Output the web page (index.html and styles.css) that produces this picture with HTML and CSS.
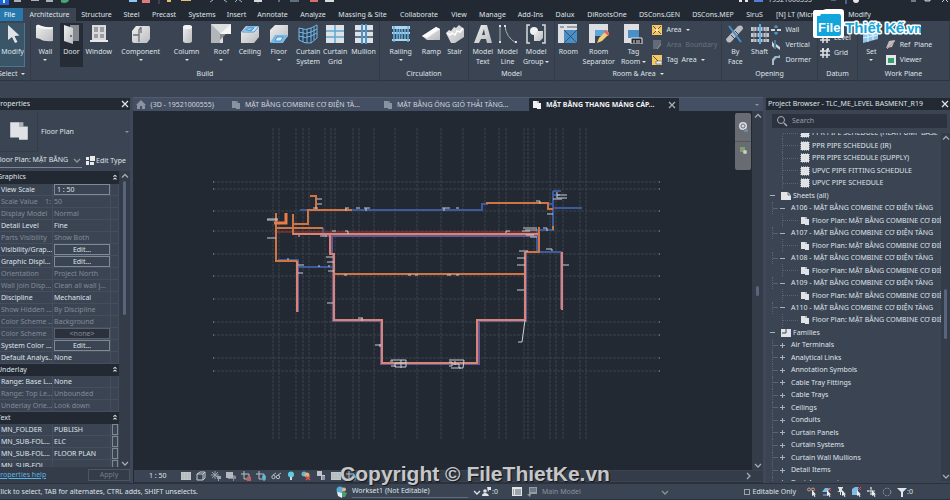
FILE: index.html
```html
<!DOCTYPE html>
<html lang="vi">
<head>
<meta charset="utf-8">
<title>TLC_ME_LEVEL BASMENT_R19</title>
<link rel="stylesheet" href="styles.css">
</head>
<body>
<svg class="defs" aria-hidden="true">
  <defs>
    <linearGradient id="g" x1="0" y1="0" x2="1" y2="1"><stop offset="0" stop-color="#f0f0f0"/><stop offset="1" stop-color="#b9bbbe"/></linearGradient>
    <symbol id="i-modify" viewBox="0 0 20 20"><path d="M5 1v15l4-3 3 6 2.500-1-3-6 5-.5z" fill="#dfe3e7"/></symbol>
    <symbol id="i-wall" viewBox="0 0 20 20"><path d="M1 2q2-2 4-.5 5 2.500 13 1.500v14q-9 1-13-2l-4-1z" fill="url(#g)"/><path d="M1 2q2-2 4-.5 5 2.500 13 1.500l-1 2Q7 6 1 2z" fill="#f4f4f4"/></symbol>
    <symbol id="i-door" viewBox="0 0 20 20"><path d="M9 1h9v16H9z" fill="#85898e"/><path d="M3 1l9 3v16l-9-3z" fill="url(#g)"/><circle cx="10" cy="12" r="1" fill="#555"/></symbol>
    <symbol id="i-window" viewBox="0 0 20 20"><path d="M3 1h14v15H3z" fill="#d9dadc"/><path d="M5 3h4v5H5zM11 3h4v5h-4zM5 10h4v4H5zM11 10h4v4h-4z" fill="#9b9fa4"/><path d="M1 16h18v2H1z" fill="#e8e8e8"/></symbol>
    <symbol id="i-component" viewBox="0 0 20 20"><path d="M1 7l4-5h13q1 0 1 2v11l-3 4H3q-2 0-2-2z" fill="url(#g)"/><path d="M2 11h6V6l2-3M8 11v7M10 9V3" stroke="#6d7178" stroke-width="1.300" fill="none"/></symbol>
    <symbol id="i-column" viewBox="0 0 20 20"><path d="M6 3q0-2 4.500-2T15 3v14q0 2-4.500 2T6 17z" fill="url(#g)"/><ellipse cx="10.500" cy="3" rx="4.500" ry="2" fill="#f5f5f5"/></symbol>
    <symbol id="i-roof" viewBox="0 0 20 20"><path d="M0 0h20v10h-8v9H0z" fill="#dcdddf"/><path d="M0 0l9 9v10H0z" fill="#b2b5b9"/><path d="M20 0L9 10h11z" fill="#f5f5f5"/><path d="M9 10h6l-6 6z" fill="#8a8e93"/></symbol>
    <symbol id="i-ceiling" viewBox="0 0 20 20"><path d="M1 8l5-6h13v11l-5 6H1z" fill="url(#g)"/><path d="M2 8l5-6h12l-5 6z" fill="#75b9e8"/><path d="M6 6l3-2h5l-3 3zM2 8h12l5-6" stroke="#3884c4" fill="#cfe8f9" stroke-width=".8"/></symbol>
    <symbol id="i-floor" viewBox="0 0 20 20"><path d="M1 6l5-5h13v11l-5 6H1z" fill="url(#g)"/><path d="M1 19l5-8h13l-5 8z" fill="#75b9e8"/><path d="M6 17l2-4h6l-2 4z" fill="#d6edfa" stroke="#3884c4" stroke-width=".8"/></symbol>
    <symbol id="i-csys" viewBox="0 0 20 20"><path d="M1 4q8 3 11-1l7-2v13l-6 5Q7 20 1 16z" fill="#29415b"/><path d="M1 4q7 3 12 0l6-3v13l-6 5Q7 20 1 16zM1 8q7 3 12 0l6-3M1 12q7 3 12 0l6-3M5 5v13M9 5v14M13 4v15M16 3v13" fill="none" stroke="#7db7e0" stroke-width="1"/></symbol>
    <symbol id="i-cgrid" viewBox="0 0 20 20"><path d="M1 1h18v18H1z" fill="#dfe2e5"/><path d="M1 7h18M1 13h18M10 1v18" stroke="#5fa6d8" stroke-width="1.500"/></symbol>
    <symbol id="i-mullion" viewBox="0 0 20 20"><path d="M1 1h18v18H1z" fill="#dfe2e5"/><path d="M1 7h18M1 13h18" stroke="#3d5066" stroke-width="1.500"/><path d="M7 0h2v20H7zM11 0h2v20h-2z" fill="#4d94c9"/></symbol>
    <symbol id="i-railing" viewBox="0 0 20 20"><path d="M1 2h18v3H1zM1 8h18v2H1zM1 15h18v2H1z" fill="#a8d7f2"/><path d="M3 2v16M6 5v10M8.500 5v10M11 5v10M14 5v10M17 2v16" stroke="#69b4e0" stroke-width="1.500"/></symbol>
    <symbol id="i-ramp" viewBox="0 0 20 20"><path d="M1 12L15 3l4 2v11H6z" fill="url(#g)"/><path d="M1 12L15 3l4 2L6 14z" fill="#fafafa"/></symbol>
    <symbol id="i-stair" viewBox="0 0 20 20"><path d="M1 9l3-3 2 1 3-4 2 1 3-3 5 4v8l-9 6H6z" fill="url(#g)"/><path d="M2 9l3 2 2-2 3 2 2-4 3 1 3-4" stroke="#fff" stroke-width="1.500" fill="none"/></symbol>
    <symbol id="i-mtext" viewBox="0 0 20 20"><path d="M1 19L8 1h6l5 18h-5l-1-4H8l-2 4zM9 11h3l-1-6z" fill="url(#g)" fill-rule="evenodd"/></symbol>
    <symbol id="i-mline" viewBox="0 0 20 20"><path d="M2 2v17M7 2q1 11 11 17" stroke="#a8adb4" fill="none"/><path d="M1 1h2v2H1zM1 17h2v2H1zM6 1h2v2H6zM17 17h2v2h-2z" fill="#dce0e4"/></symbol>
    <symbol id="i-mgroup" viewBox="0 0 20 20"><path d="M4 1H1v18h3M16 1h3v18h-3" stroke="#d9dce0" fill="none" stroke-width="1.500"/><circle cx="8" cy="7" r="4" fill="#f1f1f1"/><path d="M8 10l3-3h6v7l-3 3H8z" fill="url(#g)"/></symbol>
    <symbol id="i-room" viewBox="0 0 20 20"><path d="M0 0h19v19H0z" fill="#dcdee1"/><path d="M6 6h13v13H6z" fill="#4a90c6"/><path d="M6 6l13 13M19 6L6 19M2 3h4M9 3h10" stroke="#31435a" stroke-width=".8"/></symbol>
    <symbol id="i-rsep" viewBox="0 0 20 20"><path d="M0 0h19v12H6v7H0z" fill="#dcdee1"/><path d="M6 6h13l-6 6H6z" fill="#5fa6d8"/><path d="M8 19l2-5 6-6 3 3-6 6z" fill="#f2cf73"/><path d="M15 8l2-2 4 3-2 3z" fill="#e5675e"/></symbol>
    <symbol id="i-rtag" viewBox="0 0 20 20"><path d="M0 0h15v19H0z" fill="#dcdee1"/><path d="M4 6h11v8H4z" fill="#4a90c6"/><path d="M7 14h11v6H7z" fill="#222933" stroke="#e8e8e8"/><path d="M10 16v3M13 16v3M15 16v3" stroke="#ddd"/></symbol>
    <symbol id="i-face" viewBox="0 0 20 20"><path d="M1 15L13 2q5-2 5 3L6 18q-4 2-5-3z" fill="#b8bcc1"/><path d="M4 2l12 16" stroke="#4a90c6" stroke-width="2"/><path d="M6 11l4 4M10 7l4 4" stroke="#3b4453"/></symbol>
    <symbol id="i-shaft" viewBox="0 0 20 20"><path d="M1 3h18v4H1zM1 9h18v4H1zM1 15h18v3H1z" fill="#c3c6ca"/><path d="M7 1v18M13 1v18" stroke="#3b4453"/><path d="M10 0v20" stroke="#58aee4" stroke-width="2"/><path d="M4 3v15M16 3v15" stroke="#7f858c"/></symbol>
    <symbol id="i-set" viewBox="0 0 20 20"><path d="M2 4l15-3v14L2 19z" fill="#8fc7ec"/><path d="M2 9l15-3M2 14l15-3M7 3v15M12 2v14" stroke="#e2f1fb"/></symbol>
    <symbol id="s-area" viewBox="0 0 10 10"><path d="M0 0h10v10H0z" fill="#f3c766"/><path d="M1 1l8 8M9 1L1 9" stroke="#6b5a34"/><path d="M3 5l2-2 2 2-2 2z" fill="#ffe7aa"/></symbol>
    <symbol id="s-bound" viewBox="0 0 10 10"><path d="M1 0h8v5L6 9H1z" fill="#636b77"/><path d="M5 9l4-5" stroke="#89909a"/></symbol>
    <symbol id="s-tag" viewBox="0 0 10 10"><path d="M0 0h10v10H0z" fill="#f3c766"/><path d="M1 1l5 5" stroke="#6b5a34"/><path d="M4 6h6v3H4z" fill="#e9e9e9" stroke="#444" stroke-width=".5"/></symbol>
    <symbol id="s-owall" viewBox="0 0 10 10"><path d="M0 4h4v2H0zM6 4h4v2H6z" fill="#d2d5d9"/><path d="M5 0v3M5 7v3M3 2h4M3 8h4" stroke="#58aee4"/></symbol>
    <symbol id="s-vert" viewBox="0 0 10 10"><path d="M1 1l2 3v4L1 6zM5 4l4 3v3L5 7z" fill="#d2d5d9"/><path d="M4 0v9" stroke="#58aee4"/></symbol>
    <symbol id="s-dormer" viewBox="0 0 10 10"><path d="M1 10V4l3-3h5v2H5L3 6v4z" fill="#aeb6bf"/><path d="M4 4l5-4" stroke="#58aee4"/></symbol>
    <symbol id="s-grid" viewBox="0 0 10 10"><path d="M3 1v9M7 1v9M0 3h10M0 7h10" stroke="#dfe2e5" stroke-width="1.500"/><circle cx="3" cy="1" r="1" fill="#fff"/><circle cx="8" cy="1" r="1" fill="#fff"/></symbol>
    <symbol id="s-ref" viewBox="0 0 10 10"><path d="M0 8l3-7 6-1-3 7z" fill="#b8bec6"/><path d="M1 9l8-8" stroke="#df8d79"/></symbol>
    <symbol id="s-view" viewBox="0 0 10 10"><path d="M0 0h10v10H0z" fill="#e3e6e8"/><path d="M2 3h6v5H2z" fill="#36a06b"/></symbol>
    <symbol id="s-plan" viewBox="0 0 10 10"><path d="M1 1h4v7H1zM5 3h4v6H5z" fill="currentColor"/><path d="M5 1h2v2H5z" fill="currentColor" opacity=".7"/></symbol>
    <symbol id="s-home" viewBox="0 0 10 10"><path d="M0 5l5-5 5 5H9v4H6V6H4v3H1V5z" fill="#8a93a2"/></symbol>
    <symbol id="s-sched" viewBox="0 0 10 10"><path d="M1 1h8v8H1z" fill="#dfe1e4" stroke="#eef0f2" stroke-dasharray="1 1"/></symbol>
    <symbol id="s-sheet" viewBox="0 0 10 10"><path d="M0 1h7l3 3v5H0z" fill="#e2e4e7"/><path d="M7 1v3h3" fill="none" stroke="#3b4453" stroke-width=".7"/></symbol>
    <symbol id="s-fam" viewBox="0 0 10 10"><path d="M0 1h10v8H0z" fill="#e2e4e7"/><path d="M1 5h4V1" fill="none" stroke="#3b4453"/></symbol>
    <symbol id="s-close" viewBox="0 0 10 10"><path d="M2 2l6 6M8 2L2 8" stroke="currentColor" stroke-width="1.300"/></symbol>
    <symbol id="s-down" viewBox="0 0 10 10"><path d="M2 4l3 3 3-3" fill="none" stroke="currentColor" stroke-width="1.300"/></symbol>
    <symbol id="s-up" viewBox="0 0 10 10"><path d="M2 6.500l3-3 3 3" fill="none" stroke="currentColor" stroke-width="1.300"/></symbol>
    <symbol id="s-right" viewBox="0 0 10 10"><path d="M4 2l3 3-3 3" fill="none" stroke="currentColor" stroke-width="1.300"/></symbol>
    <symbol id="s-fold" viewBox="0 0 10 10"><path d="M3 4.500L5 3l2 1.500M3 8l2-1.500L7 8" fill="none" stroke="#e2e5e9" stroke-width="1.400"/></symbol>
    <symbol id="s-type" viewBox="0 0 10 10"><path d="M1 1h3v3H1zM5 0h5v5H5zM1 5h3v4H1zM5 6h4v3H5z" fill="#e8eaec"/></symbol>
    <symbol id="s-arrow" viewBox="0 0 10 10"><path d="M5 3v6l1.500-1 1 2 1-.5-1-2H9z" fill="#eceef0"/></symbol>
    <symbol id="v-hatch" viewBox="0 0 10 10"><path d="M0 1h10v8H0z" fill="#c8cbcf"/><path d="M0 3h10M0 5h10M0 7h10M2 1v8M5 1v8M8 1v8" stroke="#a5a9af" stroke-width=".5"/></symbol>
    <symbol id="v-cube" viewBox="0 0 10 10"><path d="M1 3l3-2h5v6L7 9H1zM1 3h6v6M7 3l2-2" fill="none" stroke="#c8cbcf"/></symbol>
    <symbol id="v-sun" viewBox="0 0 10 10"><path d="M4 0v8M0 4h8M1 1l6 6M7 1L1 7" stroke="#9ca2ab"/><path d="M6 5h4v3H8v2H7V8H6z" fill="#9ca2ab"/></symbol>
    <symbol id="v-shadow" viewBox="0 0 10 10"><path d="M0 1h7v6H0z" fill="#b4b9c0"/><path d="M2 7h5V4l3 1v3H8v2H7V8H2z" fill="#858c97"/></symbol>
    <symbol id="v-crop" viewBox="0 0 10 10"><path d="M3 0v8h7M0 3h8v7" fill="none" stroke="#b7bdc5"/><path d="M6 6l4 4M10 6l-4 4" stroke="#e05252" stroke-width="1.300"/></symbol>
    <symbol id="v-cropv" viewBox="0 0 10 10"><path d="M3 0v8h7M0 3h8v7" fill="none" stroke="#b7bdc5"/><circle cx="8" cy="6" r="2" fill="#4ec3e0"/></symbol>
    <symbol id="v-glass" viewBox="0 0 10 10"><circle cx="2.500" cy="6" r="1.700" fill="none" stroke="#b7bdc5"/><circle cx="7" cy="6" r="1.700" fill="none" stroke="#b7bdc5"/><path d="M2 4l3-2M7 4l3-2" stroke="#b7bdc5"/></symbol>
    <symbol id="v-bulb" viewBox="0 0 10 10"><circle cx="5" cy="3.500" r="3" fill="#5ad0e6"/><path d="M4 6h2v3H4z" fill="#d8dde2"/></symbol>
    <symbol id="v-ws" viewBox="0 0 10 10"><circle cx="3" cy="3" r="2.500" fill="#62b8c9"/><circle cx="6" cy="4" r="2.500" fill="#d8b38b"/><path d="M5 5l4 4M9 5L5 9" stroke="#e05252" stroke-width="1.500"/></symbol>
    <symbol id="v-page" viewBox="0 0 10 10"><path d="M1 0h5v5H1zM5 4h4v5H5z" fill="#c1c5cb"/><path d="M6 6h3M6 8h3" stroke="#3b4453" stroke-width=".7"/></symbol>
    <symbol id="t-link" viewBox="0 0 10 10"><circle cx="2" cy="2.500" r="1.500" fill="none" stroke="#d79c8e"/><circle cx="6" cy="2.500" r="1.500" fill="none" stroke="#d79c8e"/><use href="#s-arrow"/></symbol>
    <symbol id="t-under" viewBox="0 0 10 10"><path d="M0 5l3-4h5L6 5z" fill="#7fbde8"/><path d="M1 8h5" stroke="#7fbde8"/><path d="M6 1l3 3M9 1L6 4" stroke="#e05252"/><use href="#s-arrow"/></symbol>
    <symbol id="t-pin" viewBox="0 0 10 10"><path d="M1 0h5v1L5 2v2l2 1H4v3H3V5H0l2-1V2L1 1z" fill="#dfe2e5"/><use href="#s-arrow"/></symbol>
    <symbol id="t-face" viewBox="0 0 10 10"><path d="M0 2l3-2h3v8H0z" fill="#7fbde8"/><path d="M6 0l3 3M9 0L6 3" stroke="#e05252"/><use href="#s-arrow"/></symbol>
    <symbol id="t-drag" viewBox="0 0 10 10"><path d="M4 0v8M0 4h8M3 1h2M3 7h2M1 3v2" stroke="#cfd3d8"/><use href="#s-arrow"/></symbol>
    <symbol id="t-ring" viewBox="0 0 10 10"><circle cx="5" cy="5" r="3.800" fill="none" stroke="#8d95a1" stroke-dasharray="2 1"/></symbol>
    <symbol id="t-filter" viewBox="0 0 10 10"><path d="M0 1h10L6 5v5H4V5z" fill="#e2e5e8"/></symbol>
    <symbol id="t-user" viewBox="0 0 10 10"><circle cx="3" cy="4" r="1.800" fill="#e2e5e8"/><path d="M0 9q0-3 3-3t4 3zM5 0h4v3H7L6 5z" fill="#e2e5e8"/></symbol>
    <symbol id="t-list" viewBox="0 0 10 10"><path d="M0 0h10v9H0z" fill="#e2e5e8"/><path d="M1 3h1M3 3h6M1 5h1M3 5h6M1 7h1M3 7h6" stroke="#39414f" stroke-width=".8"/></symbol>
    <symbol id="t-opts" viewBox="0 0 10 10"><path d="M2 0h8v7H4l-1 3-3-3h2z" fill="#949ca7"/><path d="M3 2h6M3 4h6" stroke="#39414f" stroke-width=".8"/></symbol>
    <symbol id="t-team" viewBox="0 0 12 12"><circle cx="4" cy="4" r="3.500" fill="#5aaed6"/><circle cx="8" cy="3.500" r="2" fill="#e4b48d"/><path d="M1 6l5 1v5L2 10z" fill="#e6eef2"/><path d="M6 7q2-2 5 0l-2 4H6z" fill="#46a16c"/></symbol>
  </defs>
</svg>

<div class="app">
  <header class="quick">
    <svg class="quick-art" viewBox="0 0 950 8" preserveAspectRatio="xMinYMin slice" aria-hidden="true">
      <path d="M0 0h9v5H0z" fill="#1c63d6"/><path d="M3 0h2v3H3z" fill="#dbe8fb"/>
      <path d="M14 0h7v2h-7zM31 0h8v1h-8zM46 0h7v2h-7z" fill="#aab0b9"/><path d="M61 0h8q-1 3-5 3t-3-3z" fill="#49a574"/>
      <path d="M129 0h8v2h-8z" fill="#8cc8ef"/><path d="M142 0h8v3h-8z" fill="#e07a80"/><path d="M159 0v4M258 0v4" stroke="#59616e"/>
      <path d="M167 0h4v2h-4z" fill="#e5c069"/><path d="M181 0h10v1h-10z" fill="#e5c069"/>
      <path d="M210 2l3-2M224 0l3 2M235 2l3-3 4 3" stroke="#a6b8cc" fill="none"/>
      <path d="M254 0h8v2h-8z" fill="#d8d9db"/><path d="M279 0v2M290 1h9" stroke="#9fb5cd"/>
      <path d="M310 0h8v2h-8z" fill="#dc6b6b"/><path d="M325 0h9v2h-9z" fill="#d8dadd"/>
      <path d="M739 0h3v2h-3zM745 0h3v2h-3z" fill="#e4e6e9"/><path d="M754 1h9" stroke="#5280d8" stroke-width="2"/>
      <path d="M831 0h5M846 0v4" stroke="#78a5e0"/><circle cx="856" cy="0" r="3" fill="#e4e6e9"/>
      <path d="M911 1h5M925 0h5v1h-5zM942 2l3-3 3 3" stroke="#c8ccd1" fill="none"/>
      <text x="768" y="2" class="quick-user">19521000555</text>
    </svg>
  </header>

  <nav class="tabs">
    <a class="tab file" href="#">File</a><a class="tab current" href="#">Architecture</a><a class="tab" href="#">Structure</a><a class="tab" href="#">Steel</a><a class="tab" href="#">Precast</a><a class="tab" href="#">Systems</a><a class="tab" href="#">Insert</a><a class="tab" href="#">Annotate</a><a class="tab" href="#">Analyze</a><a class="tab" href="#">Massing &amp; Site</a><a class="tab" href="#">Collaborate</a><a class="tab" href="#">View</a><a class="tab" href="#">Manage</a><a class="tab" href="#">Add-Ins</a><a class="tab" href="#">Dalux</a><a class="tab" href="#">DiRootsOne</a><a class="tab" href="#">DSCons.GEN</a><a class="tab" href="#">DSCons.MEP</a><a class="tab" href="#">SiruS</a><a class="tab" href="#">[N] LT (Microdesk)</a><a class="tab" href="#">Modify</a>
  </nav>

  <section class="ribbon">
    <div class="panel"><div class="tools select"><button class="tool active"><svg><use href="#i-modify"/></svg><span>Modify</span></button></div><h2 class="start">Select <i class="caret"></i></h2></div>
    <div class="panel"><div class="tools build">
      <button class="tool"><svg><use href="#i-wall"/></svg><span>Wall</span><i class="caret"></i></button>
      <button class="tool pressed"><svg><use href="#i-door"/></svg><span>Door</span></button>
      <button class="tool"><svg><use href="#i-window"/></svg><span>Window</span></button>
      <button class="tool"><svg><use href="#i-component"/></svg><span>Component</span><i class="caret"></i></button>
      <button class="tool"><svg><use href="#i-column"/></svg><span>Column</span><i class="caret"></i></button>
      <button class="tool"><svg><use href="#i-roof"/></svg><span>Roof</span><i class="caret"></i></button>
      <button class="tool"><svg><use href="#i-ceiling"/></svg><span>Ceiling</span></button>
      <button class="tool"><svg><use href="#i-floor"/></svg><span>Floor</span><i class="caret"></i></button>
      <button class="tool"><svg><use href="#i-csys"/></svg><span>Curtain<br>System</span></button>
      <button class="tool"><svg><use href="#i-cgrid"/></svg><span>Curtain<br>Grid</span></button>
      <button class="tool"><svg><use href="#i-mullion"/></svg><span>Mullion</span></button>
    </div><h2>Build</h2></div>
    <div class="panel"><div class="tools circulation">
      <button class="tool"><svg><use href="#i-railing"/></svg><span>Railing</span><i class="caret"></i></button>
      <button class="tool"><svg><use href="#i-ramp"/></svg><span>Ramp</span></button>
      <button class="tool"><svg><use href="#i-stair"/></svg><span>Stair</span></button>
    </div><h2>Circulation</h2></div>
    <div class="panel"><div class="tools model">
      <button class="tool"><svg><use href="#i-mtext"/></svg><span>Model<br>Text</span></button>
      <button class="tool"><svg><use href="#i-mline"/></svg><span>Model<br>Line</span></button>
      <button class="tool"><svg><use href="#i-mgroup"/></svg><span>Model<br>Group <i class="caret"></i></span></button>
    </div><h2>Model</h2></div>
    <div class="panel"><div class="tools room">
      <button class="tool"><svg><use href="#i-room"/></svg><span>Room</span></button>
      <button class="tool"><svg><use href="#i-rsep"/></svg><span>Room<br>Separator</span></button>
      <button class="tool"><svg><use href="#i-rtag"/></svg><span>Tag<br>Room <i class="caret"></i></span></button>
      <div class="stack"><button><svg><use href="#s-area"/></svg>Area <i class="caret"></i></button><button disabled><svg><use href="#s-bound"/></svg>Area&nbsp; Boundary</button><button><svg><use href="#s-tag"/></svg>Tag&nbsp; Area <i class="caret"></i></button></div>
    </div><h2>Room &amp; Area <i class="caret"></i></h2></div>
    <div class="panel"><div class="tools opening">
      <button class="tool"><svg><use href="#i-face"/></svg><span>By<br>Face</span></button>
      <button class="tool"><svg><use href="#i-shaft"/></svg><span>Shaft</span></button>
      <div class="stack"><button><svg><use href="#s-owall"/></svg>Wall</button><button><svg><use href="#s-vert"/></svg>Vertical</button><button><svg><use href="#s-dormer"/></svg>Dormer</button></div>
    </div><h2>Opening</h2></div>
    <div class="panel"><div class="tools"><div class="stack two"><button><svg><use href="#s-grid"/></svg>Level</button><button><svg><use href="#s-grid"/></svg>Grid</button></div></div><h2>Datum</h2></div>
    <div class="panel"><div class="tools plane">
      <button class="tool"><svg><use href="#i-set"/></svg><span>Set</span><i class="caret"></i></button>
      <div class="stack"><button aria-label="Show"></button><button><svg><use href="#s-ref"/></svg>Ref&nbsp; Plane</button><button><svg><use href="#s-view"/></svg>Viewer</button></div>
    </div><h2>Work Plane</h2></div>
  </section>

  <main class="work">
    <aside class="props">
      <div class="bar"><h2 class="cut">Properties</h2><button class="ico" aria-label="Close properties"><svg><use href="#s-close"/></svg></button></div>
      <div class="family"><span class="thumb"><svg><use href="#s-plan"/></svg></span><span class="family-name">Floor Plan</span><i class="caret dim"></i></div>
      <div class="instance"><select class="cut" aria-label="Instance"><option>Floor Plan: MẶT BẰNG</option></select><svg class="dim"><use href="#s-down"/></svg><button><svg><use href="#s-type"/></svg>Edit Type</button></div>
      <div class="grid-wrap">
        <div class="grid-view">
        <table class="grid">
          <colgroup><col class="c-name"><col class="c-value"><col class="c-mark"></colgroup>
          <tr class="group"><th colspan="2"><div class="cut">Graphics</div></th><td><svg><use href="#s-fold"/></svg></td></tr>
          <tr><th><label for="scale">View Scale</label></th><td><input id="scale" value="1 : 50"></td><td></td></tr>
          <tr class="off"><th>Scale Value &nbsp;&nbsp; 1:</th><td>50</td><td></td></tr>
          <tr class="off"><th>Display Model</th><td>Normal</td><td></td></tr>
          <tr><th>Detail Level</th><td>Fine</td><td></td></tr>
          <tr class="off"><th>Parts Visibility</th><td>Show Both</td><td></td></tr>
          <tr><th>Visibility/Grap...</th><td><button>Edit...</button></td><td></td></tr>
          <tr><th>Graphic Displ...</th><td><button>Edit...</button></td><td></td></tr>
          <tr class="off"><th>Orientation</th><td>Project North</td><td></td></tr>
          <tr class="off"><th>Wall Join Disp...</th><td>Clean all wall j...</td><td></td></tr>
          <tr><th>Discipline</th><td>Mechanical</td><td></td></tr>
          <tr class="off"><th>Show Hidden ...</th><td>By Discipline</td><td></td></tr>
          <tr class="off"><th>Color Scheme ...</th><td>Background</td><td></td></tr>
          <tr class="off"><th>Color Scheme</th><td><button disabled>&lt;none&gt;</button></td><td></td></tr>
          <tr><th>System Color ...</th><td><button>Edit...</button></td><td></td></tr>
          <tr><th>Default Analys...</th><td>None</td><td></td></tr>
          <tr class="group"><th colspan="2"><div class="cut">Underlay</div></th><td><svg><use href="#s-fold"/></svg></td></tr>
          <tr><th>Range: Base L...</th><td>None</td><td></td></tr>
          <tr class="off"><th>Range: Top Le...</th><td>Unbounded</td><td></td></tr>
          <tr class="off"><th>Underlay Orie...</th><td>Look down</td><td></td></tr>
          <tr class="group"><th colspan="2"><div class="cut">Text</div></th><td><svg><use href="#s-fold"/></svg></td></tr>
          <tr><th>MN_FOLDER</th><td>PUBLISH</td><td><button aria-label="Associate folder"></button></td></tr>
          <tr><th>MN_SUB-FOL...</th><td>ELC</td><td><button aria-label="Associate sub-folder 1"></button></td></tr>
          <tr><th>MN_SUB-FOL...</th><td>FLOOR PLAN</td><td><button aria-label="Associate sub-folder 2"></button></td></tr>
          <tr><th>MN_SUB-FOL...</th><td></td><td><button aria-label="Associate sub-folder 3"></button></td></tr>
        </table>
        </div>
        <div class="scroll props-scroll"><svg><use href="#s-up"/></svg><i class="knob"></i><svg><use href="#s-down"/></svg></div>
      </div>
      <div class="props-foot"><a class="cut" href="#">Properties help</a><button disabled>Apply</button></div>
    </aside>

    <section class="view">
      <div class="docs">
        <button class="doc"><svg><use href="#s-home"/></svg>{3D - 19521000555}</button>
        <button class="doc"><svg><use href="#s-plan"/></svg>MẶT BẰNG COMBINE CƠ ĐIỆN TẦ...</button>
        <button class="doc"><svg><use href="#s-plan"/></svg>MẶT BẰNG ỐNG GIÓ THẢI TẦNG...</button>
        <button class="doc current"><svg><use href="#s-plan"/></svg>MẶT BẰNG THANG MÁNG CÁP...<svg class="x"><use href="#s-close"/></svg></button>
        <i class="caret dim docs-more"></i>
      </div>
      <div class="sheet">
        <svg class="drawing" viewBox="133 111 619 359" role="img" aria-label="Floor plan">
          <path class="axis" d="M273 128V440M279 128V440M296 128V440M303 128V440M309 128V440M325 128V440M331 128V440M335 128V440M353 128V440M359 128V440M374 128V440M395 128V440M417 128V440M441 128V440M463 128V440M485 128V440M499 128V440M506 128V440M524 128V440M528 128V440M534 128V440M550 128V440M556 128V440M563 128V440M580 128V440M586 128V440"/>
          <path class="axis" d="M213 182H660M213 189H660M213 211H660M213 231H660M213 254H660M213 276H660M213 299H660M213 322H660M213 335H660M213 358H660M213 371H660"/>
          <path class="ends" d="M213 182h1M213 189h1M213 211h1M213 231h1M213 254h1M213 276h1M213 299h1M213 322h1M213 335h1M213 358h1M213 371h1M659 182h1M659 189h1M659 211h1M659 231h1M659 254h1M659 276h1M659 299h1M659 322h1M659 335h1M659 358h1M659 371h1"/>
          <path class="blue" d="M300 210H482V204H488M553 191V230H537V252M553 191H561M553 195H560M549 204H553M553 208H582M298 267H333M323 228V235H330M539 252H562M278 260H298V264"/>
          <path class="red" d="M276 232H540"/>
          <path class="purple" d="M325 236H538M298 261V312M332 235V254M333 255V321H381V364H479V321H526V253M561 252V309"/>
          <path class="orange" d="M310 196H316V210M276 213V261H297M293 214V234H330M294 224H308V210H352M276 228H323M486 203H548V209H553M334 274H525M539 227V252H525M553 226V230"/>
          <path class="thick" d="M274 223H286V213"/>
          <path class="salmon" d="M293 234H538M330 234V254H334V320H382V363H477V320H525V252M297 261V312M562 252V310"/>
          <path class="note" d="M267 219h11M267 220h11M267 238h9M317 199h5M317 204h5M313 208h5M345 208h4M346 208v3M356 208h4M364 208h6M366 208v3M442 208h8M444 208v3M456 208h3M536 201h4M540 201v3M557 192v3h10M557 195v3h10M553 199h9M547 214h6M523 228h14M525 230h12M522 231h8M543 228h4v3M526 235h8M530 237h7M345 231h3v3M320 236h7M332 231h4M506 231h4M506 231v2M326 257h7M327 262h7M328 271h6M327 303h6M298 265h6M298 273h5M318 266h2M328 266h2M288 258v2M344 275h3M408 275h3M415 275h3M447 275h4M456 275h3M519 251h9M517 258h8M517 265h8M517 290h7M546 249h6v2M563 265h6M299 235v2M358 318h5M362 318v3M375 345h6M380 344v3M525 320L522 342H518"/>
          <path class="note" d="M391 360h15v3h-11v4h11v-4M390 361h3M391 366h5M401 360v8M449 360h15l-1 8h-4v-4h-6M449 362h3v4h-3M451 368h10M455 361v4"/>
        </svg>
        <div class="navbar"><button aria-label="Steering wheel"><svg viewBox="0 0 12 12"><circle cx="6" cy="5" r="4" fill="#d7dade"/><circle cx="6" cy="5" r="2" fill="none" stroke="#68707c"/><path d="M7 8h4v3H7z" fill="#71899f"/></svg></button><button aria-label="Zoom"><svg viewBox="0 0 12 12"><path d="M3 2h5v5H3z" fill="#7f9f6e"/><circle cx="8" cy="7" r="2" fill="#c6cfc4"/></svg></button></div>
        <div class="scroll view-scroll"><svg><use href="#s-up"/></svg><i class="knob"></i><svg><use href="#s-down"/></svg></div>
      </div>
      <div class="viewbar"><span class="ratio">1 : 50</span>
        <svg><use href="#v-hatch"/></svg><svg><use href="#v-cube"/></svg><svg><use href="#v-sun"/></svg><svg><use href="#v-shadow"/></svg><svg><use href="#v-crop"/></svg><svg><use href="#v-cropv"/></svg><svg><use href="#v-glass"/></svg><svg><use href="#v-bulb"/></svg><svg><use href="#v-ws"/></svg><svg><use href="#v-page"/></svg><svg><use href="#v-hatch"/></svg><svg><use href="#v-cropv"/></svg>
        <span class="track"><svg><use href="#s-right"/></svg></span>
      </div>
    </section>

    <aside class="browser">
      <div class="bar"><h2>Project Browser - TLC_ME_LEVEL BASMENT_R19</h2><button class="ico" aria-label="Close browser"><svg><use href="#s-close"/></svg></button></div>
      <label class="search"><svg viewBox="0 0 12 12"><circle cx="5" cy="5" r="3.500" fill="none" stroke="#a7aeb8"/><path d="M8 8l3 3" stroke="#a7aeb8" stroke-width="1.500"/></svg><input type="search" placeholder="Search" aria-label="Search"></label>
      <div class="tree-wrap">
        <ul class="tree">
          <li class="l3"><svg><use href="#s-sched"/></svg>PPR PIPE SCHEDULE (HEATPUMP BASE</li>
          <li class="l3"><svg><use href="#s-sched"/></svg>PPR PIPE SCHEDULE (IR)</li>
          <li class="l3"><svg><use href="#s-sched"/></svg>PPR PIPE SCHEDULE (SUPPLY)</li>
          <li class="l3"><svg><use href="#s-sched"/></svg>UPVC PIPE FITTING SCHEDULE</li>
          <li class="l3"><svg><use href="#s-sched"/></svg>UPVC PIPE SCHEDULE</li>
          <li class="l1"><b class="minus"></b><svg><use href="#s-sheet"/></svg>Sheets (all)</li>
          <li class="l2"><b class="minus"></b>A106 - MẶT BẰNG COMBINE CƠ ĐIỆN TẦNG</li>
          <li class="l3"><svg><use href="#s-plan"/></svg>Floor Plan: MẶT BẰNG COMBINE CƠ ĐIỆN</li>
          <li class="l2"><b class="minus"></b>A107 - MẶT BẰNG COMBINE CƠ ĐIỆN TẦNG</li>
          <li class="l3"><svg><use href="#s-plan"/></svg>Floor Plan: MẶT BẰNG COMBINE CƠ ĐIỆN</li>
          <li class="l2"><b class="minus"></b>A108 - MẶT BẰNG COMBINE CƠ ĐIỆN TẦNG</li>
          <li class="l3"><svg><use href="#s-plan"/></svg>Floor Plan: MẶT BẰNG COMBINE CƠ ĐIỆN</li>
          <li class="l2"><b class="minus"></b>A109 - MẶT BẰNG COMBINE CƠ ĐIỆN TẦNG</li>
          <li class="l3"><svg><use href="#s-plan"/></svg>Floor Plan: MẶT BẰNG COMBINE CƠ ĐIỆN</li>
          <li class="l2"><b class="minus"></b>A110 - MẶT BẰNG COMBINE CƠ ĐIỆN TẦNG</li>
          <li class="l3"><svg><use href="#s-plan"/></svg>Floor Plan: MẶT BẰNG COMBINE CƠ ĐIỆN</li>
          <li class="l1"><b class="minus"></b><svg><use href="#s-fam"/></svg>Families</li>
          <li class="l2"><b class="plus"></b>Air Terminals</li>
          <li class="l2"><b class="plus"></b>Analytical Links</li>
          <li class="l2"><b class="plus"></b>Annotation Symbols</li>
          <li class="l2"><b class="plus"></b>Cable Tray Fittings</li>
          <li class="l2"><b class="plus"></b>Cable Trays</li>
          <li class="l2"><b class="plus"></b>Ceilings</li>
          <li class="l2"><b class="plus"></b>Conduits</li>
          <li class="l2"><b class="plus"></b>Curtain Panels</li>
          <li class="l2"><b class="plus"></b>Curtain Systems</li>
          <li class="l2"><b class="plus"></b>Curtain Wall Mullions</li>
          <li class="l2"><b class="plus"></b>Detail Items</li>
          <li class="l2"><b class="plus"></b>Duct Accessories</li>
        </ul>
        <div class="scroll tree-scroll"><svg><use href="#s-up"/></svg><i class="knob"></i><svg><use href="#s-down"/></svg></div>
      </div>
    </aside>
  </main>

  <footer class="status">
    <span class="hint cut">Click to select, TAB for alternates, CTRL adds, SHIFT unselects.</span>
    <span class="workset"><svg class="team"><use href="#t-team"/></svg><select aria-label="Active workset"><option>Workset1 (Not Editable)</option></select><svg><use href="#s-down"/></svg></span>
    <span class="requests"><svg><use href="#t-user"/></svg>:0</span>
    <span class="option"><svg><use href="#t-list"/></svg><svg><use href="#t-opts"/></svg><select aria-label="Design option"><option>Main Model</option></select><svg><use href="#s-down"/></svg></span>
    <label class="editable"><input type="checkbox">Editable Only</label>
    <span class="filters"><svg><use href="#t-link"/></svg><svg><use href="#t-under"/></svg><svg><use href="#t-pin"/></svg><svg><use href="#t-face"/></svg><svg><use href="#t-drag"/></svg><svg><use href="#t-ring"/></svg><svg><use href="#t-filter"/></svg></span><span class="count">:0</span>
  </footer>

  <svg class="brand" viewBox="0 0 110 32" role="img" aria-label="FileThietKe.vn">
    <path d="M2 3q0-2 2-2h8l3-1h15q3 0 3 3v24q0 2-2 2H4q-2 0-2-2z" fill="#fff"/>
    <path d="M6 7h3l1-2h18q2 0 2 2v18q0 2-2 2H6z" fill="#12a5dc"/>
    <text x="7" y="23" class="brand-file">File</text>
    <text x="34" y="24" class="brand-name">Thiết Kế<tspan class="brand-tld">.vn</tspan></text>
  </svg>
  <div class="watermark">Copyright © FileThietKe.vn</div>
</div>
</body>
</html>
```
FILE: styles.css
```css
* { box-sizing: border-box; }
body { margin: 0; background: #222933; color: #dfe3e8; font: 7px/10px "Noto Sans", "Open Sans", sans-serif; }
button, input, select { font: inherit; color: inherit; background: none; border: 0; padding: 0; margin: 0; appearance: none; border-radius: 0; }
h2 { margin: 0; font: inherit; }
a { color: inherit; text-decoration: none; }
svg { width: 10px; height: 10px; flex: none; display: block; }
.defs { position: absolute; width: 0; height: 0; }
.cut { text-indent: -4px; overflow: hidden; }
.dim { color: #8b94a1; }
.caret { display: inline-block; border: 2px solid transparent; border-top: 2px solid currentColor; border-bottom: 0; vertical-align: middle; }

.app { position: relative; height: 100vh; overflow: hidden; display: grid; grid-template-rows: 8px 13px 76px minmax(0, 1fr) 17px; }
.quick { overflow: hidden; }
.quick-art { width: 100%; height: 8px; }
.quick-user { font-size: 7px; fill: #d9dde2; }

.tabs { display: grid; grid-template-columns: 23fr 53fr 41fr 29fr 36fr 40fr 29fr 43fr 38fr 61fr 52fr 28fr 39fr 37fr 32fr 52fr 53fr 54fr 29fr 73fr 35fr 73fr; }
.tab { display: flex; align-items: center; justify-content: center; min-width: 0; white-space: nowrap; overflow: hidden; }
.tab.file { background: #2779ad; color: #fff; padding-right: 4px; }
.tab.current { background: #3b4453; }

.ribbon { display: grid; grid-template-columns: 31fr 349fr 89fr 86fr 167fr 96fr 40fr 92fr; grid-template-rows: 60px; background: #3b4453; }
.panel { display: flex; flex-direction: column; justify-content: space-between; min-width: 0; border-right: 1px solid #333b48; border-bottom: 1px solid #2e3541; }
.panel h2 { display: flex; align-items: center; justify-content: center; gap: 4px; height: 12px; white-space: nowrap; }
.panel h2.start { text-indent: -2px; justify-content: flex-start; }
.tools { display: grid; height: 46px; padding-top: 2px; }
.select { grid-template-columns: 26fr 5fr; }
.build { grid-template-columns: 29fr 23fr 32fr 52fr 40fr 30fr 27fr 31fr 28fr 26fr 31fr; }
.circulation { grid-template-columns: 42fr 20fr 27fr; }
.model { grid-template-columns: 28fr 22fr 36fr; }
.room { grid-template-columns: 27fr 34fr 36fr 70fr; }
.opening { grid-template-columns: 27fr 22fr 47fr; }
.plane { grid-template-columns: 27fr 65fr; }
.tools > * { min-width: 0; }
.tool { display: flex; flex-direction: column; align-items: center; padding-top: 1px; white-space: nowrap; }
.tool svg { width: 20px; height: 20px; margin-bottom: 3px; }
.tool > .caret { margin-top: 2px; }
.tool.active { background: #3a5468; box-shadow: inset -1px -1px #4b7590; }
.tool.pressed { background: #252c36; }
.stack { display: grid; grid-auto-rows: 1fr; padding-left: 1px; }
.stack.two { padding: 7px 0 7px 2px; }
.stack button { display: flex; align-items: center; gap: 4px; white-space: nowrap; }
.stack button:disabled { color: #67707d; }

.work { display: grid; grid-template-columns: 130px minmax(0, 1fr) 184px; gap: 3px; background: #3f4858; min-height: 0; }
.bar { display: flex; justify-content: space-between; align-items: center; height: 13px; background: #222933; border-top: 1px solid #3b4453; white-space: nowrap; overflow: hidden; }
.ico { display: block; }
.props { display: grid; grid-template-rows: 13px 43px 18px minmax(0, 1fr) 16px; background: #3b4453; min-height: 0; }
.family { display: flex; align-items: center; padding-right: 1px; }
.thumb { display: grid; place-items: center; width: 38px; height: 41px; border-right: 1px solid #343c49; border-bottom: 1px solid #343c49; color: #dfe1e4; }
.thumb svg { width: 22px; height: 22px; }
.family-name { flex: 1; padding-left: 3px; }
.instance { display: flex; align-items: center; height: 15px; }
.instance select { width: 72px; height: 15px; border-bottom: 1px solid #7d8693; }
.instance > svg { height: 15px; border-bottom: 1px solid #7d8693; }
.instance button { display: flex; gap: 1px; padding-left: 3px; white-space: nowrap; }
.grid-wrap { display: grid; grid-template-columns: minmax(0, 1fr) 11px; min-height: 0; }
.grid-view { overflow: hidden; }
.grid { width: 100%; table-layout: fixed; border-collapse: collapse; }
.c-value { width: 58px; }
.c-mark { width: 8px; }
.grid tr { height: 12px; }
.grid th, .grid td { height: 12px; padding: 0 0 0 1px; font-weight: 400; text-align: left; line-height: 11px; white-space: nowrap; overflow: hidden; border-right: 1px solid #454e5d; border-bottom: 1px solid #454e5d; }
.grid .group > * { background: #232933; border-color: #232933; padding: 0; }
.grid .cut { text-indent: -3px; }
.grid .group svg { width: 8px; height: 10px; }
.grid .off { color: #838b97; }
.grid td input, .grid td button { display: block; width: 100%; height: 11px; border: 1px solid #7f8895; line-height: 9px; }
.grid td input { padding-left: 2px; }
.grid button:disabled { background: #2b323d; border-color: #59616e; }
.scroll { display: flex; flex-direction: column; align-items: center; justify-content: space-between; background: #343c49; color: #a2abb8; }
.knob { width: 3px; background: #59657a; border-radius: 2px; }
.props-scroll .knob { height: 134px; margin-bottom: 143px; }
.props-foot { display: flex; align-items: center; justify-content: space-between; background: #343c49; }
.props-foot a { color: #5bb5e2; text-decoration: underline; }
.props-foot button { width: 42px; height: 12px; border: 1px solid #4c5564; color: #747d8a; }

.view { display: grid; grid-template-rows: 14px minmax(0, 1fr) 13px; background: #222933; min-width: 0; min-height: 0; }
.docs { display: grid; grid-template-columns: 95fr 152fr 149fr 150fr 84fr; background: #454f63; border-top: 1px solid #515c71; }
.doc { display: flex; align-items: center; gap: 4px; padding-left: 3px; min-width: 0; white-space: nowrap; color: #d0d5dc; overflow: hidden; }
.doc > svg { color: #8a93a2; }
.doc .x { margin-left: auto; margin-right: 2px; color: #a7aeb8; }
.doc.current { background: #222933; font-weight: 700; color: #eef0f2; }
.doc.current > svg:first-child { color: #eef0f2; }
.docs-more { justify-self: end; align-self: center; margin-right: 4px; }
.sheet { position: relative; display: grid; grid-template-columns: minmax(0, 1fr) 11px; min-height: 0; }
.drawing { width: 100%; height: 100%; }
.drawing path { fill: none; stroke-linejoin: miter; }
.axis { stroke: #3a424c; stroke-dasharray: 3 1; stroke-width: 1; }
.ends { stroke: #929aa3; }
.blue { stroke: #3d5b9c; stroke-width: 2; }
.red { stroke: #a8342c; stroke-width: 1; }
.purple { stroke: #68588f; stroke-width: 2; }
.orange { stroke: #cf7442; stroke-width: 2; }
.thick { stroke: #e97c49; stroke-width: 3; }
.salmon { stroke: #d98575; stroke-width: 2; }
.note { stroke: #c9ced4; stroke-width: 1; }
.navbar { position: absolute; top: 2px; right: 12px; display: grid; grid-template-rows: 28px 29px; width: 16px; background: #686c72; border-radius: 2px; }
.navbar button { display: grid; place-items: center; }
.navbar button + button { border-top: 1px solid #53585f; padding-bottom: 10px; }
.navbar svg { width: 12px; height: 12px; }
.view-scroll .knob { height: 10px; }
.viewbar { display: flex; align-items: center; gap: 5px; margin-left: 1px; background: #3b4453; border-bottom: 1px solid #2b323d; }
.ratio { width: 42px; padding-left: 15px; white-space: nowrap; }
.track { flex: 1; display: flex; justify-content: flex-end; padding-right: 10px; background: #343c49; color: #a2abb8; }

.browser { display: grid; grid-template-rows: 13px 23px minmax(0, 1fr) 2px; background: #3b4453; min-width: 0; min-height: 0; }
.browser .bar h2 { padding-left: 2px; }
.search { display: flex; align-items: center; gap: 4px; height: 14px; margin: 4px 3px 0 6px; padding-left: 4px; background: #2c333f; }
.search svg { width: 12px; height: 12px; }
.search input { flex: 1; min-width: 0; }
.search input::placeholder { color: #98a0ab; opacity: 1; }
.tree-wrap { display: grid; grid-template-columns: minmax(0, 1fr) 9px; overflow: hidden; }
.tree { display: grid; grid-auto-rows: 1fr; margin: -6px 0 -8px; padding: 0; list-style: none; overflow: hidden; }
.tree li { display: flex; align-items: center; min-height: 0; white-space: nowrap; gap: 2px; }
.tree .l1 { padding-left: 4px; }
.tree .l2 { margin-left: 6px; padding-left: 7px; background: linear-gradient(#5a6371, #5a6371) 0 50% / 5px 1px no-repeat; border-left: 1px dotted #5a6371; }
.tree .l3 { margin-left: 16px; padding-left: 17px; border-left: 1px dotted #5a6371; }
.l3::before { content: ""; width: 15px; margin-left: -17px; border-top: 1px dotted #5a6371; }
.minus, .plus { width: 5px; height: 5px; margin-right: 4px; background: linear-gradient(#aab2bd, #aab2bd) 0 50% / 5px 1px no-repeat; }
.plus { background: linear-gradient(#aab2bd, #aab2bd) 0 50% / 5px 1px no-repeat, linear-gradient(#aab2bd, #aab2bd) 50% 0 / 1px 5px no-repeat; }
.tree-scroll .knob { height: 50px; margin-top: 13px; }

.status { display: flex; align-items: center; background: #3b4453; border-top: 1px solid #2b323d; border-bottom: 1px solid #2b323d; white-space: nowrap; }
.hint { width: 336px; }
.workset { display: flex; align-items: center; gap: 4px; width: 146px; }
.workset .team { width: 12px; height: 12px; }
.workset select { flex: 1; height: 12px; border-bottom: 1px solid #606a78; }
.requests { display: flex; width: 30px; }
.option { display: flex; align-items: center; gap: 5px; width: 158px; color: #8a929e; }
.option select { flex: 1; height: 12px; }
.editable { display: flex; align-items: center; gap: 2px; margin-left: auto; padding-right: 11px; }
.editable input { width: 6px; height: 6px; border: 1px solid #9aa2ad; }
.filters { display: flex; gap: 5px; }
.count { width: 43px; }

.brand { position: absolute; left: 85%; top: 9px; width: 110px; height: 32px; margin-left: 3px; }
.brand text { font-family: "Liberation Sans", Arial, sans-serif; font-weight: 700; }
.brand-file { font-size: 13px; fill: #fff; }
.brand-name { font-size: 15px; fill: #12a5dc; stroke: #fff; stroke-width: 3px; paint-order: stroke; stroke-linejoin: round; }
.brand-tld { font-size: 12px; }
.watermark { position: absolute; left: 0; right: 0; bottom: 12px; text-align: center; font: 700 21px/28px "Liberation Sans", Arial, sans-serif; color: #c6c7c9; text-shadow: 1px 1px 1px #11151a; }
```
